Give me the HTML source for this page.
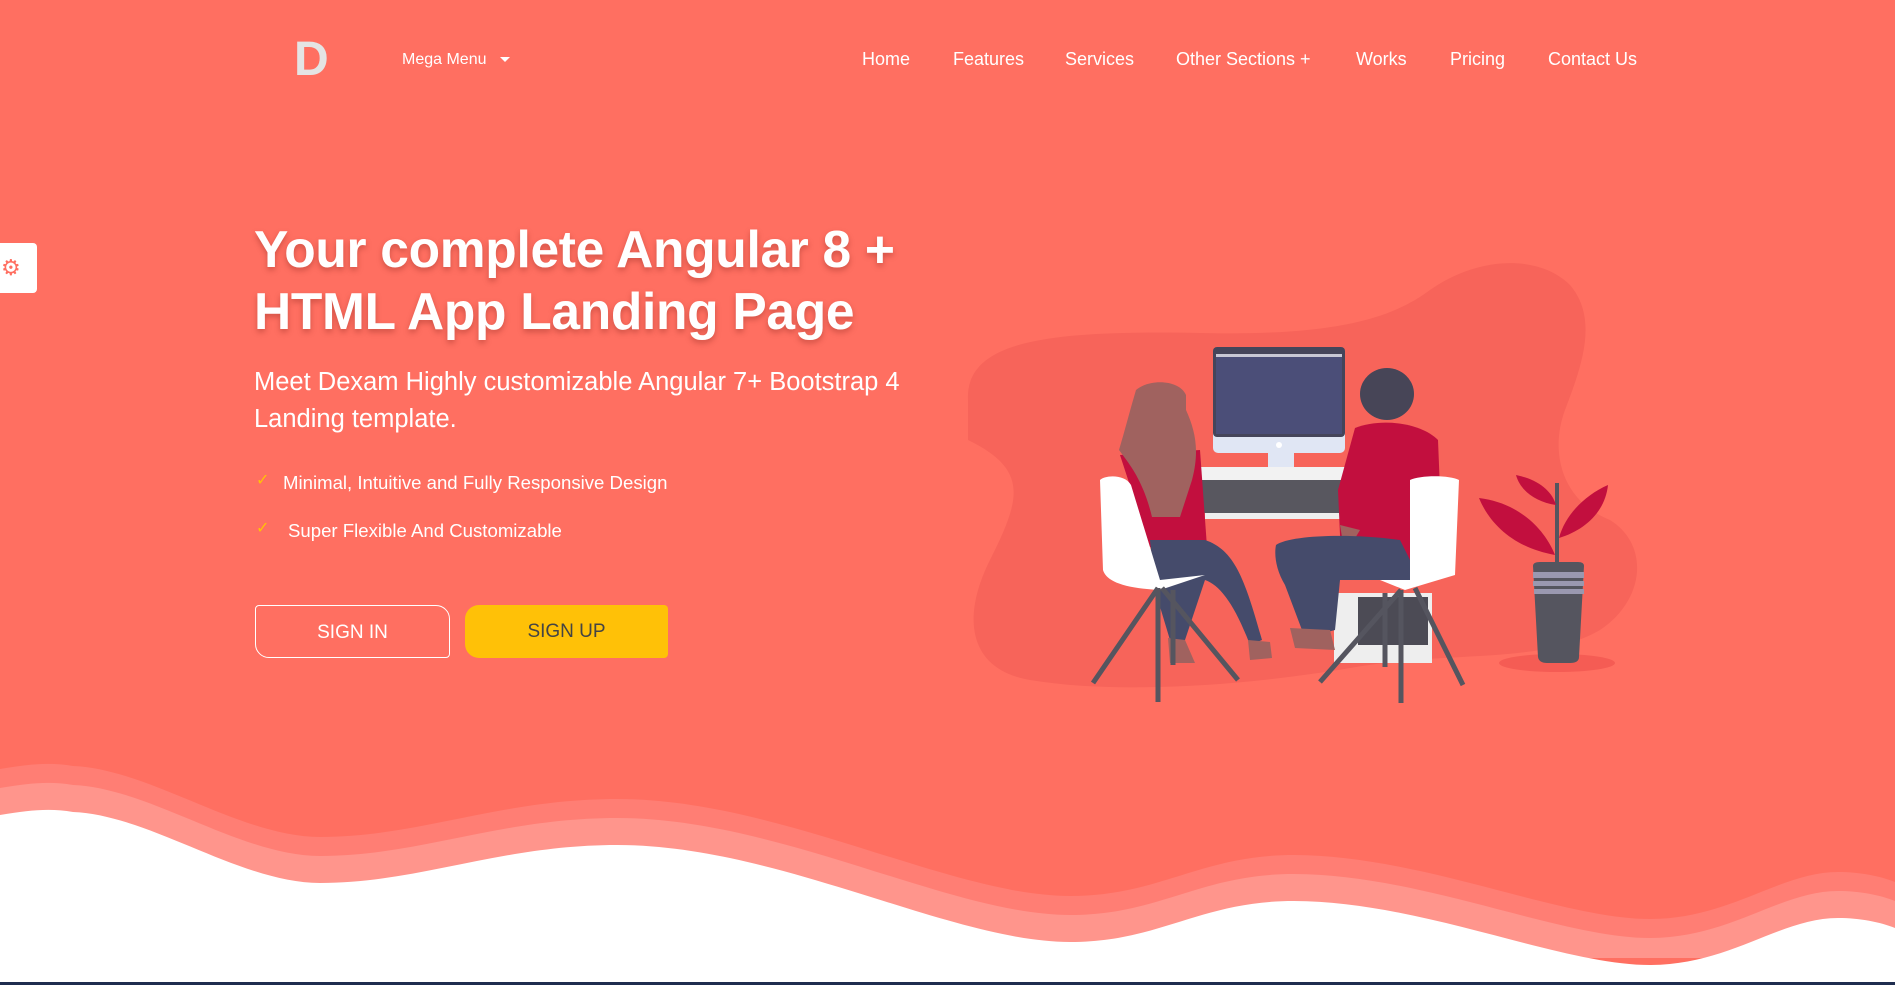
<!DOCTYPE html>
<html><head><meta charset="utf-8"><style>
*{margin:0;padding:0;box-sizing:border-box}
body{width:1895px;height:985px;overflow:hidden;background:#ff6f61;font-family:"Liberation Sans",sans-serif;color:#fff;position:relative}
.a{position:absolute;white-space:nowrap}
.nav{top:48px;font-size:18px;line-height:22px}
h1{position:absolute;left:254px;top:218px;font-size:51.5px;line-height:62px;font-weight:bold;text-shadow:0 3px 6px rgba(120,30,20,.35);letter-spacing:-0.3px}
.sub{left:254px;top:364px;font-size:25.5px;line-height:37px;white-space:normal;width:700px}
.li{font-size:18.6px;left:283px}
.ck{position:absolute;color:#ffc107;font-size:16px;left:256px}
.btn{position:absolute;top:605px;height:53px;font-size:19px;line-height:53px;text-align:center}
</style></head><body>
<svg class="a" style="left:0;top:0" width="1895" height="985">
<defs><path id="wv" d="M0 815 C30 810 50 808 73 812 C150 815 240 883 320 883 C420 883 500 845 617 845 C780 845 950 942 1070 942 C1160 942 1200 901 1294 901 C1420 901 1560 965 1650 965 C1730 965 1780 918 1838 918 C1860 918 1880 922 1895 928 L1895 985 L0 985 Z"/></defs>
<path d="M968 400 C965 340 1050 330 1200 333 C1330 336 1390 320 1430 290 C1480 255 1540 255 1570 285 C1600 320 1580 370 1565 410 C1550 450 1560 500 1610 520 C1650 545 1645 600 1600 630 C1540 665 1450 650 1350 668 C1250 685 1120 695 1030 680 C970 670 960 620 990 560 C1020 500 1030 470 968 440 Z" fill="#f7645a"/>
<ellipse cx="1557" cy="663" rx="58" ry="9" fill="#f55c54"/>
<!-- monitor -->
<rect x="1213" y="347" width="132" height="106" rx="5" fill="#e0e6f4"/>
<rect x="1213" y="347" width="132" height="90" rx="4" fill="#45455a"/>
<rect x="1216" y="355" width="126" height="79" fill="#4b4e78"/>
<rect x="1216" y="354" width="126" height="3" fill="#c8c8d4"/>
<circle cx="1279" cy="445" r="3" fill="#fff"/>
<rect x="1268" y="453" width="26" height="15" fill="#e0e6f4"/>
<rect x="1246" y="467" width="66" height="4" fill="#e0e6f4"/>
<rect x="1200" y="467" width="145" height="13" fill="#f2f2f2"/>
<rect x="1200" y="480" width="143" height="33" fill="#58575f"/>
<rect x="1205" y="513" width="138" height="6" fill="#eee"/>
<!-- tower -->
<rect x="1334" y="593" width="98" height="70" fill="#eee"/>
<rect x="1358" y="597" width="70" height="48" fill="#4c4b55"/>
<!-- woman -->
<path d="M1120 455 L1200 450 L1207 547 L1150 547 Z" fill="#c20f3e"/>
<path d="M1150 540 L1205 540 C1235 550 1245 580 1262 640 L1250 645 C1235 605 1220 585 1205 580 L1185 640 L1170 640 L1155 590 Z" fill="#454b6b"/>
<path d="M1168 638 L1185 640 L1195 663 L1170 663 Z M1248 640 L1270 642 L1272 658 L1250 660 Z" fill="#a0625f"/>
<path d="M1136 390 C1150 378 1180 380 1186 395 L1186 410 C1195 430 1200 450 1192 480 L1180 517 L1152 517 C1143 480 1130 465 1119 450 C1125 430 1130 410 1136 390 Z" fill="#a0625f"/>
<path d="M1100 480 C1105 475 1125 474 1131 485 L1160 580 L1205 575 L1160 590 C1120 588 1106 580 1103 570 Z" fill="#fff"/>
<path d="M1158 588 L1093 683 M1158 588 L1158 702 M1162 588 L1238 680 M1173 590 L1173 665" stroke="#55555f" stroke-width="5"/>
<!-- man -->
<path d="M1355 428 C1380 418 1420 422 1438 440 L1440 490 L1425 573 L1345 573 L1340 535 L1338 490 Z" fill="#c20f3e"/>
<path d="M1340 525 L1345 555 L1360 530 Z" fill="#a0625f"/>
<ellipse cx="1387" cy="394" rx="27" ry="26" fill="#474557"/>
<path d="M1276 545 C1290 535 1350 533 1400 540 L1420 580 L1340 580 L1335 630 L1305 638 L1285 585 C1276 570 1274 555 1276 545 Z" fill="#454b6b"/>
<path d="M1290 628 L1330 630 L1335 650 L1295 648 Z" fill="#a0625f"/>
<path d="M1410 480 C1420 475 1450 475 1459 480 L1455 575 L1405 590 L1380 580 L1410 580 Z" fill="#fff"/>
<path d="M1401 590 L1320 682 M1401 590 L1401 703 M1415 588 L1463 685 M1385 593 L1385 667" stroke="#55555f" stroke-width="5"/>
<!-- plant -->
<path d="M1557 483 L1557 565" stroke="#55555f" stroke-width="4"/>
<path d="M1479 498 C1520 503 1545 530 1555 555 C1515 548 1490 525 1479 498 Z" fill="#c20f3e"/>
<path d="M1516 475 C1540 480 1552 492 1556 505 C1535 502 1520 490 1516 475 Z" fill="#c20f3e"/>
<path d="M1608 485 C1605 512 1585 530 1559 538 C1565 515 1585 495 1608 485 Z" fill="#c20f3e"/>
<path d="M1533 566 Q1533 562 1540 562 L1578 562 Q1584 562 1584 566 L1579 657 Q1579 663 1570 663 L1547 663 Q1539 663 1538 657 Z" fill="#55555f"/>
<rect x="1533" y="572" width="51" height="6" fill="#9a98b0"/><rect x="1533" y="581" width="51" height="5" fill="#9a98b0"/><rect x="1534" y="589" width="50" height="5" fill="#9a98b0"/>
<!-- waves -->
<use href="#wv" fill="#ff7e74" transform="translate(0,-46)"/>
<use href="#wv" fill="#ff958c" transform="translate(0,-27)"/>
<use href="#wv" fill="#fff"/>
<rect x="0" y="982" width="1895" height="3" fill="#1f2d4f"/>
</svg>
<div class="a" style="left:294px;top:36px;font-size:48px;font-weight:bold;color:#e4e4e4;line-height:48px">D</div>
<div class="a nav" style="left:402px;top:49px;font-size:16px">Mega Menu</div>
<div class="a" style="left:500px;top:57px;width:0;height:0;border-left:5px solid transparent;border-right:5px solid transparent;border-top:5px solid #fff"></div>
<div class="a nav" style="left:862px">Home</div>
<div class="a nav" style="left:953px">Features</div>
<div class="a nav" style="left:1065px">Services</div>
<div class="a nav" style="left:1176px">Other Sections +</div>
<div class="a nav" style="left:1356px">Works</div>
<div class="a nav" style="left:1450px">Pricing</div>
<div class="a nav" style="left:1548px">Contact Us</div>
<div class="a" style="left:0;top:243px;width:37px;height:50px;background:#fff;border-radius:0 4px 4px 0;color:#ff6f61;font-size:22px;line-height:50px;padding-left:1px">⚙</div>
<h1>Your complete Angular 8 +<br>HTML App Landing Page</h1>
<div class="a sub">Meet Dexam Highly customizable Angular 7+ Bootstrap 4 Landing template.</div>
<div class="ck" style="top:470px">✓</div><div class="a li" style="top:472px">Minimal, Intuitive and Fully Responsive Design</div>
<div class="ck" style="top:518px">✓</div><div class="a li" style="top:520px;left:288px">Super Flexible And Customizable</div>
<div class="btn" style="left:255px;width:195px;border:1px solid #fff;border-radius:4px 14px 4px 14px">SIGN IN</div>
<div class="btn" style="left:465px;width:203px;background:#ffc107;color:#444;border-radius:14px 4px 4px 14px">SIGN UP</div>
</body></html>
